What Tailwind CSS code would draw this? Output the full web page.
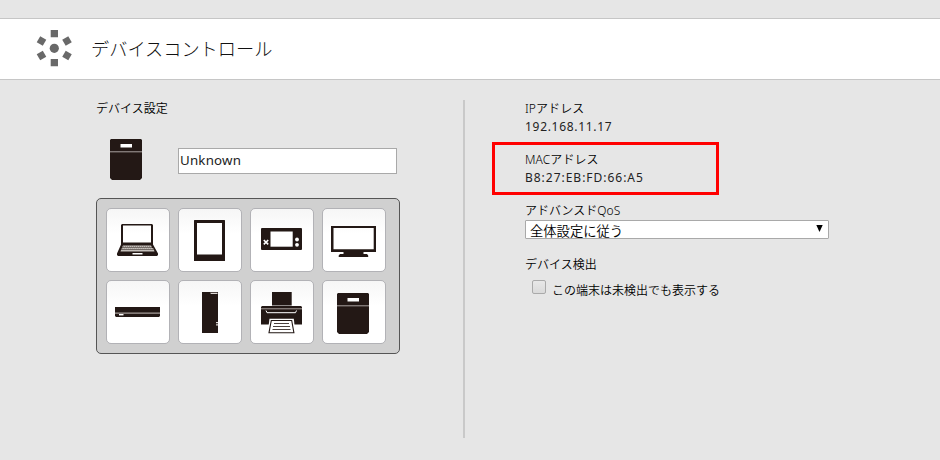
<!DOCTYPE html>
<html lang="ja">
<head>
<meta charset="utf-8">
<title>デバイスコントロール</title>
<script src="https://cdn.jsdelivr.net/npm/@tailwindcss/browser@4"></script>
</head>
<body class="h-[460px] w-[940px] overflow-hidden bg-[#e6e6e6] pt-[18px] font-['Noto_Sans','Noto_Sans_CJK_JP',sans-serif] text-[12px] leading-[18px] font-[350] text-black">
<svg class="hidden">
  <symbol id="nas" viewBox="0 0 32 41">
    <path fill="#231815" d="M1 0h30l1 1v38l-2 2H2l-2-2V1z"/>
    <path fill="#fff" d="M10.500 5h11.500v3.500H10.500z"/>
    <path fill="#aaa3a1" d="M0 12.300h32v1H0z"/>
  </symbol>
</svg>
<header class="flex h-[62px] items-center border-y border-[#c6c6c6] bg-white pl-[36px]">
  <svg class="h-[38px] w-[38px]" viewBox="36 30 38 38" fill="#696969">
    <circle cx="54.300" cy="48.300" r="4.600"/>
    <path d="M50.700 30h7.300v7.300h-7.300zM50.700 59h7.300v7.300h-7.300z"/>
    <path transform="rotate(30 41.500 41)" d="M38 37.500h7v7h-7z"/>
    <path transform="rotate(-30 67 41)" d="M63.500 37.500h7v7h-7z"/>
    <path transform="rotate(-30 41.500 55.500)" d="M38 52h7v7h-7z"/>
    <path transform="rotate(30 67 55.500)" d="M63.500 52h7v7h-7z"/>
  </svg>
  <h1 class="-mt-[3px] ml-[17px] font-['Noto_Sans_CJK_JP',sans-serif] text-[18.2px] font-light leading-[30px] text-[#111]">デバイスコントロール</h1>
</header>
<main class="flex pt-[20px]">
  <section class="w-[463px] pl-[96px]">
    <h2>デバイス設定</h2>
    <div class="mt-[21px] flex h-[41px] pl-[14px]">
      <svg class="h-[41px] w-[32px]"><use href="#nas"/></svg>
      <input type="text" value="Unknown" class="mt-[9px] ml-[36px] h-[26px] w-[219px] border border-[#a9a9a9] bg-white px-[1px] pb-[2px] text-[13.3px] font-normal tracking-[0.2px] text-[#222] outline-none">
    </div>
    <div class="mt-[18px] grid h-[156px] w-[304px] grid-cols-[repeat(4,64px)] grid-rows-[repeat(2,64px)] gap-[8px] rounded-[5px] border border-[#555] bg-[#d0d0d0] p-[9px]">
      <button class="rounded-[5px] border border-[#b2b2b6] bg-linear-to-b from-[#f6f6f6] to-white to-40%">
        <svg class="-m-px h-[64px] w-[64px]" viewBox="0 0 64 64">
          <path fill="#231815" fill-rule="evenodd" d="M16 16h30l1 1v19.500l5 9V47l-1 1H12l-1-1v-1.500l4-9V17zM17 17.500v17h28v-17z"/>
          <path fill="#c5c0bb" d="M17 37.500h28l1 2H16zM16 40h31l1 1.500H15zM15 42h33l.5 1.500h-34z"/>
          <path stroke="#6a605c" stroke-width=".5" stroke-dasharray="1 1" d="M17 38.500h28M16 41h31"/>
          <path fill="#fff" d="M26.500 45h10v1.500h-10z"/>
        </svg>
      </button>
      <button class="rounded-[5px] border border-[#b2b2b6] bg-linear-to-b from-[#f6f6f6] to-white to-40%">
        <svg class="-m-px h-[64px] w-[64px]" viewBox="0 0 64 64">
          <rect x="16" y="12" width="31" height="41" rx=".6" fill="#231815"/>
          <path fill="#fff" d="M19 15h25v31.500H19z"/>
        </svg>
      </button>
      <button class="rounded-[5px] border border-[#b2b2b6] bg-linear-to-b from-[#f6f6f6] to-white to-40%">
        <svg class="-m-px h-[64px] w-[64px]" viewBox="0 0 64 64">
          <rect x="11" y="20" width="41" height="22" rx="1" fill="#231815"/>
          <path fill="#fff" d="M20.500 23.500h22.200v15.200H20.500z"/>
          <path stroke="#fff" stroke-width="1.600" d="M13.800 32l4.400 4.400M18.200 32l-4.400 4.400"/>
          <circle cx="47" cy="31.500" r="1.900" fill="#fff"/><circle cx="47" cy="36.800" r="1.900" fill="#fff"/>
        </svg>
      </button>
      <button class="rounded-[5px] border border-[#b2b2b6] bg-linear-to-b from-[#f6f6f6] to-white to-40%">
        <svg class="-m-px h-[64px] w-[64px]" viewBox="0 0 64 64">
          <path fill="#231815" fill-rule="evenodd" d="M9 18h45v26H41.500v2H45l1.200 1.500V49H16.700v-1.500L18 46h3.500v-2H9zM11.500 20v21.300h40.200V20z"/>
        </svg>
      </button>
      <button class="rounded-[5px] border border-[#b2b2b6] bg-linear-to-b from-[#f6f6f6] to-white to-40%">
        <svg class="-m-px h-[64px] w-[64px]" viewBox="0 0 64 64">
          <path fill="#231815" d="M9 27h45v9l-1 1H10l-1-1z"/>
          <path fill="#a69d9a" d="M9 32.500h45v1.200H9z"/>
          <path fill="#fff" d="M13 34h4.500v1.400H13z"/>
        </svg>
      </button>
      <button class="rounded-[5px] border border-[#b2b2b6] bg-linear-to-b from-[#f6f6f6] to-white to-40%">
        <svg class="-m-px h-[64px] w-[64px]" viewBox="0 0 64 64">
          <path fill="#231815" d="M24 12h16v41H24z"/>
          <path fill="#ddd8d5" d="M32 12.700h7.500v1.200H33zM38 42h2v1.200h-2zM38 44.300h2v1.200h-2z"/>
        </svg>
      </button>
      <button class="rounded-[5px] border border-[#b2b2b6] bg-linear-to-b from-[#f6f6f6] to-white to-40%">
        <svg class="-m-px h-[64px] w-[64px]" viewBox="0 0 64 64">
          <path fill="#231815" d="M22 12h19.700v13.500H22zM12 26h39l1 1v17.500H11V27z"/>
          <path stroke="#aaa19e" d="M11 28.800h41"/>
          <path fill="none" stroke="#fff" stroke-width="1" d="M16 30.500l1 2.200h28.500l1-2.200"/>
          <path fill="#fff" d="M19.500 38.800h24.300L45.500 54h-28z"/>
          <path fill="#fff" stroke="#231815" stroke-width="1.100" d="M21.300 40.500h20.400l2.200 12.200H19z"/>
          <path stroke="#4b413e" d="M24 43.500h15M23 46.500h17M22.500 49.500h18"/>
        </svg>
      </button>
      <button class="rounded-[5px] border border-[#b2b2b6] bg-linear-to-b from-[#f6f6f6] to-white to-40%">
        <svg class="-m-px h-[64px] w-[64px]" viewBox="0 0 64 64"><use href="#nas" x="15" y="13" width="32" height="41"/></svg>
      </button>
    </div>
  </section>
  <div class="h-[338px] w-[2px] bg-[#c9c9c9]"></div>
  <section class="relative pl-[60px]">
    <dl>
      <dt class="tracking-[0.1px]">IPアドレス</dt>
      <dd class="font-normal tracking-[0.7px] text-[#222]">192.168.11.17</dd>
      <dt class="mt-[15px] tracking-[0.1px]">MACアドレス</dt>
      <dd class="font-normal tracking-[0.98px] text-[#222]">B8:27:EB:FD:66:A5</dd>
      <dt class="mt-[15px]">アドバンスドQoS</dt>
      <dd class="flex h-[19px] w-[304px] items-center justify-between rounded-[1px] border border-[#a9a9a9] bg-white pl-[4px] pr-[5px] text-[13.3px]">
        <span class="pt-[2px]">全体設定に従う</span>
        <svg class="mb-[2px] h-[7px] w-[7px]" viewBox="0 0 7 7"><path d="M.3 0h6.400L3.500 7z"/></svg>
      </dd>
      <dt class="mt-[17px]">デバイス検出</dt>
      <dd class="flex pl-[7px]">
        <span class="mt-[6px] h-[14px] w-[14px] rounded-[2px] border border-[#aaa] bg-linear-to-b from-[#e8e8e8] to-[#dadada]"></span>
        <span class="mt-[8px] ml-[6px]">この端末は未検出でも表示する</span>
      </dd>
    </dl>
    <div class="absolute top-[42px] left-[27px] h-[53px] w-[227px] border-3 border-[#f00]"></div>
  </section>
</main>
</body>
</html>
